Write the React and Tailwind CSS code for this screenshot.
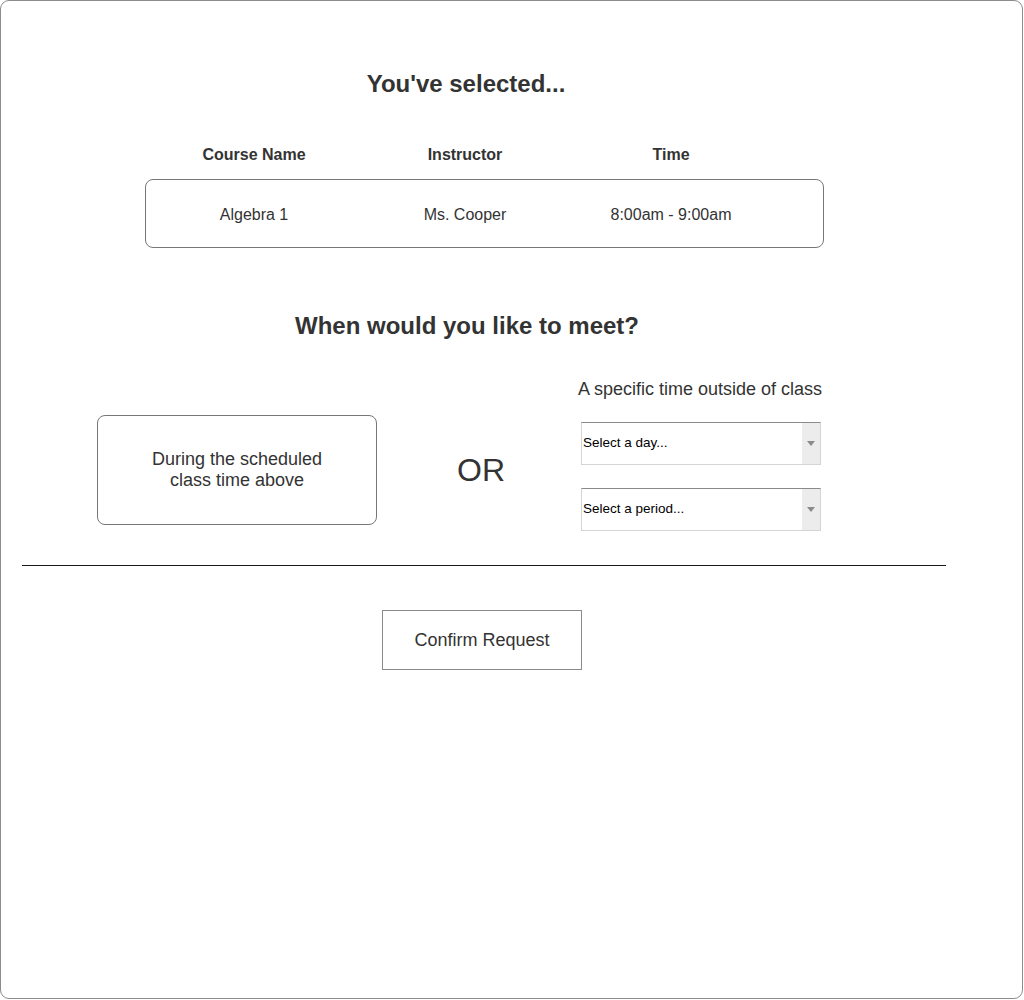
import React from "react";

function Select({ label }) {
  return (
    <div className="flex w-[240px] h-[43px] border border-[#d4d4d4] border-t-[#8a8a8a] bg-white">
      <div className="flex-1 flex items-center pl-[1px] text-[13.5px] text-black">{label}</div>
      <div className="w-[18px] h-full bg-[#ececec] flex items-center justify-center">
        <svg width="8" height="5" viewBox="0 0 8 5">
          <path d="M0 0 L8 0 L4 5 Z" fill="#8a8a8a" />
        </svg>
      </div>
    </div>
  );
}

export default function App() {
  return (
    <div
      className="w-[1024px] h-[1000px] bg-white text-[#333]"
      style={{ fontFamily: '"Liberation Sans", Arial, sans-serif' }}
    >
      <div className="w-[1023px] h-[999px] border border-[#8c8c8c] rounded-[9px] flex flex-col">
        <h1 className="mt-[69px] ml-[315px] w-[300px] text-center text-[24px] leading-[28px] font-bold">
          You've selected...
        </h1>

        <div className="mt-[47px] ml-[148px] flex text-[16px] leading-[19px] font-bold">
          <div className="w-[210px] text-center">Course Name</div>
          <div className="w-[212px] text-center">Instructor</div>
          <div className="w-[200px] text-center">Time</div>
        </div>

        <div className="mt-[15px] ml-[144px] w-[679px] h-[69px] border border-[#777] rounded-[8px] flex items-center pl-[3px] pt-[1px] text-[16px] leading-[19px]">
          <div className="w-[210px] text-center">Algebra 1</div>
          <div className="w-[212px] text-center">Ms. Cooper</div>
          <div className="w-[200px] text-center">8:00am - 9:00am</div>
        </div>

        <h2 className="mt-[64px] ml-[216px] w-[500px] text-center text-[24px] leading-[28px] font-bold">
          When would you like to meet?
        </h2>

        <div className="mt-[39px] flex items-start">
          <div className="mt-[36px] ml-[96px] w-[280px] h-[110px] border border-[#777] rounded-[8px] flex items-center justify-center text-center text-[18px] leading-[21px]">
            During the scheduled
            <br />
            class time above
          </div>
          <div className="mt-[73px] ml-[59px] w-[90px] text-center text-[32px] leading-[36px]">OR</div>
          <div className="ml-[52px] flex flex-col">
            <div className="text-[18px] leading-[20px] whitespace-nowrap">A specific time outside of class</div>
            <div className="mt-[23px] ml-[3px]">
              <Select label="Select a day..." />
            </div>
            <div className="mt-[23px] ml-[3px]">
              <Select label="Select a period..." />
            </div>
          </div>
        </div>

        <div className="mt-[34px] ml-[21px] w-[924px] h-px bg-[#1a1a1a]" />

        <div className="mt-[44px] ml-[381px] w-[200px] h-[60px] border border-[#8a8a8a] flex items-center justify-center text-[18px]">
          Confirm Request
        </div>
      </div>
    </div>
  );
}
